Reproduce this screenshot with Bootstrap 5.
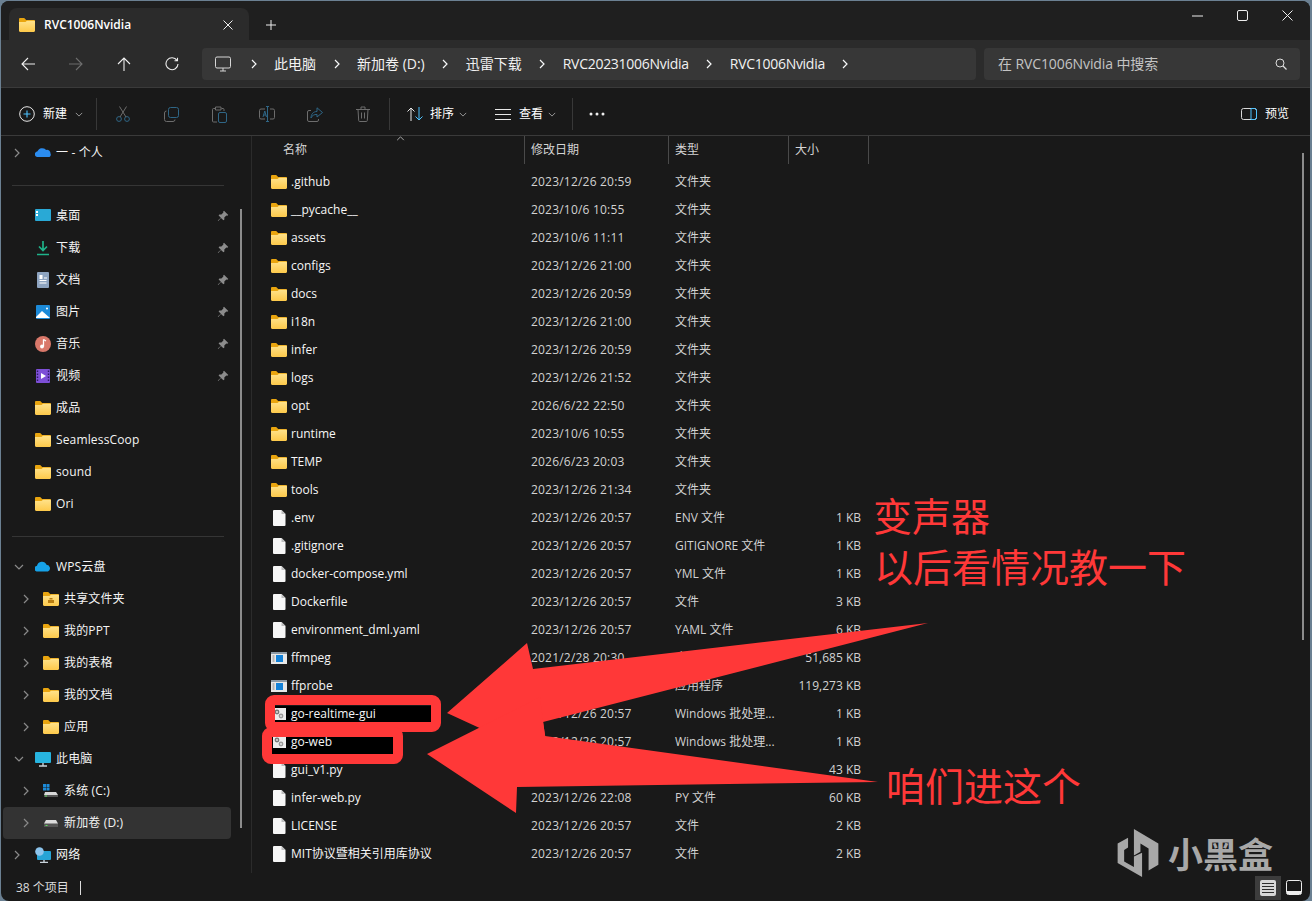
<!DOCTYPE html>
<html lang="zh-CN">
<head>
<meta charset="UTF-8">
<title>RVC1006Nvidia</title>
<link href="https://cdn.jsdelivr.net/npm/bootstrap@5.3.0/dist/css/bootstrap.min.css" rel="stylesheet">
<style>
html, body { height: 100%; overflow: hidden; }
body {
  position: relative;
  background: #6b8092;
  padding: 1px 2px 0 1px;
  font-family: "Open Sans", "Noto Sans CJK SC", sans-serif;
  font-size: 12px;
  color: #fff;
}
svg { display: block; flex: none; }
.win { height: 100%; background: #191919; border-radius: 8px; overflow: hidden; }

.title-bar { height: 39px; flex: none; background: #1f1f1f; padding-left: 8px; }
.tab-on { width: 240px; height: 32px; background: #2b2b2b; border-radius: 8px 8px 0 0; padding: 1px 16px 0 10px; }
.tab-name { margin-left: 9px; font-weight: 600; }
.tab-plus { margin-left: 16px; margin-top: 9px; }
.win-btn { width: 45px; height: 29px; }

.nav-bar { height: 48px; background: #2b2b2b; padding: 0 10px 0 3px; border-bottom: 1px solid #3a3a3a; }
.nav-btn { width: 48px; }
.crumbs { width: 774px; height: 32px; margin-left: 6px; background: #373737; border-radius: 4px; padding-left: 13px; gap: 17.500px; font-size: 14px; color: #f2f2f2; }
.crumb-pc { margin-right: 2px; }
.crumb-latin { letter-spacing: -.28px; }
.find-box { width: 316px; height: 32px; margin-left: 8px; background: #373737; border-radius: 4px; padding: 0 13px 0 14px; font-size: 14px; letter-spacing: -.1px; color: #c4c4c4; }

.tool-bar { height: 48px; border-bottom: 1px solid #3a3a3a; padding: 5px 21px 0 18px; }
.tool-sep { width: 1px; height: 32px; background: #383838; }
.tool-btn { width: 48px; color: #5f6a73; }
.tool-first { margin-left: 2px; }
.tool-last { margin-left: 2px; }
.drop-text { margin-left: 7px; }
.drop-mark { color: #9a9a9a; margin-left: 5px; }

.side-pane { width: 251px; border-right: 1px solid #2b2b2b; position: relative; padding-top: 1px; }
.side-row { height: 32px; margin: 0 20px 0 2px; border-radius: 4px; }
.side-row.is-sel { background: #333; }
.chev-slot { width: 32px; padding-left: 11px; color: #8a8a8a; }
.lvl-one .chev-slot { width: 40px; padding-left: 20px; }
.side-text { margin-left: 5px; color: #f4f4f4; letter-spacing: .15px; }
.side-pin { margin-left: auto; margin-right: 2px; }
.side-sep { height: 1px; background: #353535; margin: 16px 27px 14px 11px; }
.side-scroll { position: absolute; left: 239px; top: 73px; width: 2px; height: 619px; background: #8c8c8c; }

.list-pane { position: relative; min-width: 0; }
.list-head { height: 28px; color: #d4d4d4; }
.head-cell { height: 28px; border-right: 1px solid #4a4a4a; }
.sort-mark { position: absolute; left: 144px; top: 0; color: #a8a8a8; }
.list-grid { display: grid; grid-template-columns: 272px 144px 120px 80px; }
.list-head .list-grid { grid-template-columns: 273px 144px 120px 80px; }
.list-head .list-grid > div:nth-child(1) { padding-left: 31px; }
.list-head .list-grid > div:nth-child(2) { padding-left: 6px; }
.list-head .list-grid > div:nth-child(3) { padding-left: 6px; }
.list-head .list-grid > div:nth-child(4) { padding-left: 6px; }
.list-rows { margin-top: 4px; }
.file-row { height: 28px; align-items: center; color: #d2d2d2; }
.file-name { height: 28px; padding-left: 19px; gap: 4px; color: #f6f6f6; white-space: nowrap; }
.file-date { padding-left: 7px; letter-spacing: .2px; }
.file-type { padding-left: 7px; white-space: nowrap; }
.file-size { text-align: right; padding-right: 7px; }
.hit-one { background: linear-gradient(#000, #000) 23px 6px / 156px 17px no-repeat; }
.hit-two { background: linear-gradient(#000, #000) 20px 9px / 121px 18px no-repeat; }
.list-scroll { position: absolute; right: 6px; top: 17px; width: 2px; height: 487px; background: #8c8c8c; }

.status-bar { height: 28px; padding: 1px 3px 0 15px; color: #dcdcdc; }
.status-tick { width: 1px; height: 14px; background: #ddd; margin-left: 11px; }
.view-on { width: 26px; height: 24px; background: #3c3c3c; }
.view-off { width: 26px; height: 24px; }

.paint-layer { position: absolute; left: 0; top: 0; pointer-events: none; }
.note-red { position: absolute; color: #ff3838; font-family: "Noto Sans CJK SC", sans-serif; font-size: 39px; line-height: 50px; white-space: nowrap; pointer-events: none; font-weight: 400; }
.note-one { left: 873px; top: 489px; }
.note-two { left: 874px; top: 540px; }
.note-three { left: 886px; top: 759px; }
.mark-box { position: absolute; left: 1116px; top: 827px; color: #a8a8a8; gap: 8px; pointer-events: none; }
.mark-text { font-family: "Noto Sans CJK SC", sans-serif; font-size: 35px; font-weight: 700; line-height: 52px; }
</style>
</head>
<body>

<svg width="0" height="0" style="position:absolute">
  <defs>
    <linearGradient id="g-folder" x1="0" y1="0" x2="0" y2="1"><stop offset="0" stop-color="#ffe28a"/><stop offset="1" stop-color="#fdc94a"/></linearGradient>
    <symbol id="i-folder" viewBox="0 0 16 14">
      <path d="M0 1.200C0 .5.5 0 1.200 0h4l2 2H15c.6 0 1 .4 1 1v3H0z" fill="#e9a50f"/>
      <path d="M0 4h6.500l1.500-1.200H15c.6 0 1 .4 1 1v9c0 .7-.5 1.200-1.200 1.200H1.200C.5 14 0 13.500 0 12.800z" fill="url(#g-folder)"/>
    </symbol>
    <symbol id="i-file" viewBox="0 0 13 16">
      <path d="M1 0h7.500L12.500 4v11a1 1 0 0 1-1 1H1a1 1 0 0 1-1-1V1a1 1 0 0 1 1-1z" fill="#f6f6f6"/>
      <path d="M8.500 0v4h4z" fill="#bdbdbd"/>
    </symbol>
    <symbol id="i-exe" viewBox="0 0 16 12">
      <rect width="16" height="12" fill="#e8e8e8"/>
      <rect width="16" height="2" fill="#8d9aa5"/>
      <rect x="5" y="3" width="7" height="7" fill="#1482d8"/>
      <rect x="1.500" y="3" width="2" height="7" fill="#b5b5b5"/>
    </symbol>
    <symbol id="i-bat" viewBox="0 0 13 12">
      <rect width="13" height="12" fill="#ececec"/>
      <circle cx="4" cy="4" r="2.400" fill="#777"/><circle cx="4" cy="4" r=".9" fill="#ececec"/>
      <circle cx="8" cy="8" r="2.400" fill="#999"/><circle cx="8" cy="8" r=".9" fill="#ececec"/>
    </symbol>
    <symbol id="i-pin" viewBox="0 0 12 12">
      <path d="M7 .7 11.300 5 10.300 5.700 9.300 5.500 7.300 7.500 7.400 9.500 6.400 10.300 4 7.900 1.200 11 .8 10.600 3.900 7.800 1.600 5.400 2.400 4.500 4.400 4.600 6.400 2.600 6.200 1.600z" fill="#8c8c8c"/>
    </symbol>
    <symbol id="i-chev-r" viewBox="0 0 6 10"><path d="M1 1l4 4-4 4" fill="none" stroke="currentColor" stroke-width="1.200"/></symbol>
    <symbol id="i-chev-d" viewBox="0 0 10 6"><path d="M1 1l4 4 4-4" fill="none" stroke="currentColor" stroke-width="1.200"/></symbol>
  </defs>
</svg>

<div class="win d-flex flex-column">

  <div class="title-bar d-flex align-items-end">
    <div class="tab-on d-flex align-items-center">
      <svg width="16" height="14"><use href="#i-folder"/></svg>
      <span class="tab-name">RVC1006Nvidia</span>
      <svg class="ms-auto" width="10" height="10" viewBox="0 0 10 10"><path d="M.5.500l9 9m0-9l-9 9" stroke="#eee" stroke-width="1"/></svg>
    </div>
    <div class="tab-plus align-self-center">
      <svg width="12" height="12" viewBox="0 0 12 12"><path d="M6 1v10M1 6h10" stroke="#eee" stroke-width="1"/></svg>
    </div>
    <div class="ms-auto align-self-start d-flex">
      <div class="win-btn d-flex align-items-center justify-content-center"><svg width="11" height="2"><path d="M0 1h11" stroke="#eee"/></svg></div>
      <div class="win-btn d-flex align-items-center justify-content-center"><svg width="11" height="11" viewBox="0 0 11 11"><rect x=".5" y=".5" width="10" height="10" rx="1.500" fill="none" stroke="#eee"/></svg></div>
      <div class="win-btn d-flex align-items-center justify-content-center"><svg width="11" height="11" viewBox="0 0 11 11"><path d="M.5.500l10 10m0-10l-10 10" stroke="#eee"/></svg></div>
    </div>
  </div>

  <div class="nav-bar d-flex align-items-center flex-shrink-0">
    <div class="nav-btn d-flex justify-content-center"><svg width="14" height="14" viewBox="0 0 14 14"><path d="M14 7H1M7 1 1 7l6 6" fill="none" stroke="#eee" stroke-width="1.100"/></svg></div>
    <div class="nav-btn d-flex justify-content-center"><svg width="14" height="14" viewBox="0 0 14 14"><path d="M0 7h13M7 1l6 6-6 6" fill="none" stroke="#6d6d6d" stroke-width="1.100"/></svg></div>
    <div class="nav-btn d-flex justify-content-center"><svg width="14" height="14" viewBox="0 0 14 14"><path d="M7 14V1M1 7l6-6 6 6" fill="none" stroke="#eee" stroke-width="1.100"/></svg></div>
    <div class="nav-btn d-flex justify-content-center"><svg width="14" height="14" viewBox="0 0 14 14"><path d="M12 3.400A6 6 0 1 0 13 7M12.500 .8v3h-3" fill="none" stroke="#eee" stroke-width="1.100"/></svg></div>
    <div class="crumbs d-flex align-items-center">
      <svg width="16" height="16" viewBox="0 0 16 16" class="crumb-pc"><rect x=".5" y="1" width="15" height="11" rx="1.500" fill="none" stroke="#d6d6d6"/><path d="M5 15h6M8 12v3" stroke="#d6d6d6"/></svg>
      <svg width="6" height="10" class="text-light"><use href="#i-chev-r"/></svg><span>此电脑</span>
      <svg width="6" height="10" class="text-light"><use href="#i-chev-r"/></svg><span>新加卷 (D:)</span>
      <svg width="6" height="10" class="text-light"><use href="#i-chev-r"/></svg><span>迅雷下载</span>
      <svg width="6" height="10" class="text-light"><use href="#i-chev-r"/></svg><span class="crumb-latin">RVC20231006Nvidia</span>
      <svg width="6" height="10" class="text-light"><use href="#i-chev-r"/></svg><span class="crumb-latin">RVC1006Nvidia</span>
      <svg width="6" height="10" class="text-light"><use href="#i-chev-r"/></svg>
    </div>
    <div class="find-box d-flex align-items-center justify-content-between">
      <span>在 RVC1006Nvidia 中搜索</span>
      <svg width="12" height="12" viewBox="0 0 12 12"><circle cx="5" cy="5" r="4" fill="none" stroke="#ddd"/><path d="M8 8l3.500 3.500" stroke="#ddd" stroke-width="1.200"/></svg>
    </div>
  </div>

  <div class="tool-bar d-flex align-items-center flex-shrink-0">
    <div class="d-flex align-items-center" style="width:77px">
      <svg width="16" height="16" viewBox="0 0 16 16"><circle cx="8" cy="8" r="7.300" fill="none" stroke="#e8e8e8"/><path d="M8 4.500v7M4.500 8h7" stroke="#4cc2ff" stroke-width="1.100"/></svg>
      <span class="ms-2">新建</span>
      <svg width="8" height="5" class="drop-mark ms-2"><use href="#i-chev-d"/></svg>
    </div>
    <div class="tool-sep"></div>
    <div class="tool-btn tool-first d-flex justify-content-center"><svg width="14" height="16" viewBox="0 0 14 16"><circle cx="3" cy="13" r="2.400" fill="none" stroke="#2f6686"/><circle cx="11" cy="13" r="2.400" fill="none" stroke="#2f6686"/><path d="M4 11 10.500 .5M10 11 3.500 .5" fill="none" stroke="#6d6d6d"/></svg></div>
    <div class="tool-btn d-flex justify-content-center"><svg width="15" height="15" viewBox="0 0 15 15"><rect x="4.500" y=".5" width="10" height="10" rx="2" fill="none" stroke="#2f6686"/><path d="M2.500 4A2 2 0 0 0 .5 6v6.500a2 2 0 0 0 2 2H9a2 2 0 0 0 2-2" fill="none" stroke="#6d6d6d"/></svg></div>
    <div class="tool-btn d-flex justify-content-center"><svg width="15" height="17" viewBox="0 0 15 17"><path d="M3 2.500H1.500a1 1 0 0 0-1 1V15a1 1 0 0 0 1 1H5M9.500 2.500H11a1 1 0 0 1 1 1V5M3.500 1h5.500v3H3.500z" fill="none" stroke="#6d6d6d"/><rect x="6.500" y="6.500" width="8" height="10" rx="1.500" fill="none" stroke="#2f6686"/></svg></div>
    <div class="tool-btn d-flex justify-content-center"><svg width="16" height="16" viewBox="0 0 16 16"><path d="M6 3H2a1.500 1.500 0 0 0-1.500 1.500v7A1.500 1.500 0 0 0 2 13h4M11 3h3a1.500 1.500 0 0 1 1.500 1.500v7A1.500 1.500 0 0 1 14 13h-3" fill="none" stroke="#6d6d6d"/><path d="M8.500 .5v15M7 .5h3M7 15.500h3M4 11l1.800-6 1.700 6M4.600 9h2.400" fill="none" stroke="#2f6686"/></svg></div>
    <div class="tool-btn d-flex justify-content-center"><svg width="16" height="15" viewBox="0 0 16 15"><path d="M4 3.500H2A1.500 1.500 0 0 0 .5 5v8A1.500 1.500 0 0 0 2 14.500h8a1.500 1.500 0 0 0 1.500-1.500v-1" fill="none" stroke="#6d6d6d"/><path d="M10 .8 15.500 5.500 10 10V7.400C7 7.400 5 8.500 4 11c0-4 2.500-6.500 6-6.500z" fill="none" stroke="#2f6686"/></svg></div>
    <div class="tool-btn d-flex justify-content-center"><svg width="14" height="16" viewBox="0 0 14 16"><path d="M0 3.500h14M5 3.500V1h4v2.500M2 3.500l.7 11a1 1 0 0 0 1 1h6.600a1 1 0 0 0 1-1l.7-11M5.500 6.500v6M8.500 6.500v6" fill="none" stroke="#6d6d6d"/></svg></div>
    <div class="tool-sep tool-last"></div>
    <div class="d-flex align-items-center" style="margin-left:17px;width:88px">
      <svg width="16" height="14" viewBox="0 0 16 14"><path d="M4 14V1M.5 4.500 4 1l3.500 3.500" fill="none" stroke="#e8e8e8"/><path d="M12 0v13M8.500 9.500 12 13l3.500-3.500" fill="none" stroke="#4cc2ff"/></svg>
      <span class="drop-text">排序</span>
      <svg width="8" height="5" class="drop-mark"><use href="#i-chev-d"/></svg>
    </div>
    <div class="d-flex align-items-center" style="width:77px">
      <svg width="16" height="11" viewBox="0 0 16 11"><path d="M0 .5h16M0 5.500h16M0 10.500h16" stroke="#e8e8e8"/></svg>
      <span style="margin-left:8px">查看</span>
      <svg width="8" height="5" class="drop-mark"><use href="#i-chev-d"/></svg>
    </div>
    <div class="tool-sep"></div>
    <svg width="16" height="4" viewBox="0 0 16 4" style="margin-left:16px"><circle cx="2" cy="2" r="1.500" fill="#eee"/><circle cx="8" cy="2" r="1.500" fill="#eee"/><circle cx="14" cy="2" r="1.500" fill="#eee"/></svg>
    <div class="ms-auto d-flex align-items-center">
      <svg width="16" height="12" viewBox="0 0 16 12"><rect x=".5" y=".5" width="15" height="11" rx="2" fill="none" stroke="#d8d8d8"/><path d="M10 .5h3.500a2 2 0 0 1 2 2v7a2 2 0 0 1-2 2H10z" fill="none" stroke="#4cc2ff"/></svg>
      <span class="ms-2">预览</span>
    </div>
  </div>

  <div class="d-flex flex-grow-1 overflow-hidden" style="flex-basis:0;min-height:0">
    <div class="side-pane flex-shrink-0" id="sidePane">
      <div class="side-scroll"></div>
    </div>
    <div class="list-pane flex-grow-1 overflow-hidden">
      <div class="list-head">
        <div class="list-grid" style="width:617px">
          <div class="head-cell d-flex align-items-center">名称</div>
          <div class="head-cell d-flex align-items-center">修改日期</div>
          <div class="head-cell d-flex align-items-center">类型</div>
          <div class="head-cell d-flex align-items-center">大小</div>
        </div>
      </div>
      <svg class="sort-mark" width="9" height="5"><use href="#i-chev-d" transform="rotate(180 4.500 2.500)"/></svg>
      <div class="list-rows" id="fileRows"></div>
      <div class="list-scroll"></div>
    </div>
  </div>

  <div class="status-bar d-flex align-items-center flex-shrink-0">
    <span>38 个项目</span>
    <div class="status-tick"></div>
    <div class="ms-auto d-flex align-items-center">
      <div class="view-on d-flex align-items-center justify-content-center"><svg width="16" height="16" viewBox="0 0 16 16"><rect width="16" height="16" rx="2" fill="#d8d8d8"/><path d="M2 3.500h12M2 6.500h12M2 9.500h12M2 12.500h12" stroke="#2e2e2e"/></svg></div>
      <div class="view-off d-flex align-items-center justify-content-center"><svg width="16" height="15" viewBox="0 0 16 15"><rect x=".5" y=".5" width="15" height="14" rx="2" fill="#191919" stroke="#eee"/><rect x="1" y="11" width="14" height="3" fill="#eee"/></svg></div>
    </div>
  </div>
</div>

<svg class="paint-layer" width="1312" height="901" viewBox="0 0 1312 901">
  <polygon points="447,713 527,643 533,669 928,623 543,722 549,760" fill="#ff3838"/>
  <polygon points="427,754 540,697 545,736 878,782 517,787 516,813" fill="#ff3838"/>
  <rect x="270" y="700" width="166" height="27" rx="4" fill="none" stroke="#ff3838" stroke-width="10"/>
  <rect x="267" y="732" width="131" height="27" rx="4" fill="none" stroke="#ff3838" stroke-width="10"/>
</svg>
<div class="note-red note-one">变声器</div>
<div class="note-red note-two">以后看情况教一下</div>
<div class="note-red note-three">咱们进这个</div>
<div class="mark-box d-flex align-items-center">
  <svg width="44" height="52" viewBox="75 50 135 158"><path d="M130 55 205 100V165L175 183V115L150 100V125L130 137z" fill="#a8a8a8"/><path d="M112 82V112L100 120V155L130 172V140L155 128V203L80 160V100z" fill="#a8a8a8"/></svg>
  <span class="mark-text">小黑盒</span>
</div>

<script>
  // 左侧导航
  const svgIcons = {
    cloud: '<path d="M1 11.500a3 3 0 0 1 1.500-5.300A5 5 0 0 1 11 5a3.500 3.500 0 0 1 4.500 3.500 2.800 2.800 0 0 1-1 3.500H2z" fill="#2b8cf0"/>',
    desk: '<rect y="1" width="16" height="12" rx="1" fill="#29a9d6"/><rect x="1" y="3" width="2" height="2" fill="#fff"/><rect x="1" y="6" width="2" height="2" fill="#fff"/>',
    down: '<path d="M8 1v9M4 6.500 8 10.500l4-4M2 14.500h12" fill="none" stroke="#1fb38a" stroke-width="1.700"/>',
    docs: '<rect x="2" width="12" height="16" rx="1" fill="#8ea4c0"/><path d="M4.500 3.500h3M9 6h3M4.500 8.500h7M4.500 11h7" stroke="#fff"/><rect x="4.500" y="4" width="3" height="3" fill="#fff"/>',
    pics: '<rect x="1" y="1" width="14" height="14" rx="1" fill="#1c8ad8"/><path d="M1 13l6-6 8 7H1z" fill="#fff"/><circle cx="12" cy="4.500" r="1" fill="#fff"/>',
    music: '<circle cx="8" cy="8" r="8" fill="#d9786a"/><path d="M8.500 3.500v7" stroke="#fff" stroke-width="1.300"/><circle cx="7" cy="10.500" r="1.900" fill="#fff"/><path d="M8.500 3.500 11 5" stroke="#fff" stroke-width="1.300"/>',
    video: '<rect x="1" y="1" width="14" height="14" rx="1" fill="#7d4fd6"/><path d="M6 5v6l5-3z" fill="#fff"/><path d="M2.500 2.500v11M13.500 2.500v11" stroke="#2c1a60" stroke-width="1.400" stroke-dasharray="1.500 1.500"/>',
    wps: '<path d="M1.500 12.500a3 3 0 0 1 .5-5.800 5 5 0 0 1 9.500-1 3.600 3.600 0 0 1 1.500 6.800H2z" fill="#16a2e8"/>',
    share: '<use href="#i-folder" width="16" height="14" y="1"/><path d="M5 9h6v3H5zM6.500 7h3v1.500h-3z" fill="#b97d10"/>',
    pc: '<rect y="1" width="16" height="11" rx="1" fill="#27b4e0"/><path d="M4 15h8M8 12v3" stroke="#c8d2da" stroke-width="1.400"/>',
    drivec: '<rect x="0" y="1" width="3" height="3" fill="#1c8ad8"/><rect x="3.500" y="1" width="3" height="3" fill="#1c8ad8"/><rect y="4.500" width="3" height="3" fill="#1c8ad8"/><rect x="3.500" y="4.500" width="3" height="3" fill="#1c8ad8"/><path d="M2 9h11l2 3v2H1v-2z" fill="#d8d8d8"/><rect x="1" y="12" width="14" height="2" fill="#555"/><rect x="2" y="12.500" width="2" height="1" fill="#5ee05e"/>',
    drived: '<path d="M3 5h10l2 3.500V12H1V8.500z" fill="#dcdcdc"/><rect x="1" y="8.500" width="14" height="3.500" fill="#555"/><rect x="2.500" y="10" width="2" height="1" fill="#5ee05e"/>',
    net: '<rect x="2" y="4" width="14" height="9" rx="1" fill="#27a4d6"/><path d="M5 15.500h8M9 13v2.500" stroke="#c8d2da" stroke-width="1.400"/><circle cx="4.500" cy="4.500" r="4.300" fill="#8cc4ec"/>'
  };
  const folderIcon = '<svg width="16" height="14"><use href="#i-folder"/></svg>';
  const icon = name => name == "folder" ? folderIcon : `<svg width="16" height="16" viewBox="0 0 16 16">${svgIcons[name]}</svg>`;
  const sideItems = [
    { t: "一 - 个人", i: "cloud", c: "r" },
    "sep",
    { t: "桌面", i: "desk", pin: 1 }, { t: "下载", i: "down", pin: 1 }, { t: "文档", i: "docs", pin: 1 },
    { t: "图片", i: "pics", pin: 1 }, { t: "音乐", i: "music", pin: 1 }, { t: "视频", i: "video", pin: 1 },
    { t: "成品", i: "folder" }, { t: "SeamlessCoop", i: "folder" }, { t: "sound", i: "folder" }, { t: "Ori", i: "folder" },
    "sep",
    { t: "WPS云盘", i: "wps", c: "d" },
    { t: "共享文件夹", i: "share", c: "r", l: 1 }, { t: "我的PPT", i: "folder", c: "r", l: 1 },
    { t: "我的表格", i: "folder", c: "r", l: 1 }, { t: "我的文档", i: "folder", c: "r", l: 1 }, { t: "应用", i: "folder", c: "r", l: 1 },
    { t: "此电脑", i: "pc", c: "d" },
    { t: "系统 (C:)", i: "drivec", c: "r", l: 1 }, { t: "新加卷 (D:)", i: "drived", c: "r", l: 1, sel: 1 },
    { t: "网络", i: "net", c: "r" }
  ];
  const sidePane = document.getElementById("sidePane");
  sideItems.forEach(item => {
    const div = document.createElement("div");
    if (item == "sep") { div.className = "side-sep"; sidePane.appendChild(div); return; }
    div.className = "side-row d-flex align-items-center" + (item.l ? " lvl-one" : "") + (item.sel ? " is-sel" : "");
    let chev = "";
    if (item.c == "r") chev = '<svg width="6" height="10"><use href="#i-chev-r"/></svg>';
    if (item.c == "d") chev = '<svg width="10" height="6"><use href="#i-chev-d"/></svg>';
    div.innerHTML = `<div class="chev-slot">${chev}</div>${icon(item.i)}<span class="side-text">${item.t}</span>` +
      (item.pin ? '<svg class="side-pin" width="12" height="12"><use href="#i-pin"/></svg>' : "");
    sidePane.appendChild(div);
  });

  // 文件列表
  const D = "2023/12/26 ";
  const files = [
    [".github", D + "20:59", "文件夹", "", "folder"], ["__pycache__", "2023/10/6 10:55", "文件夹", "", "folder"],
    ["assets", "2023/10/6 11:11", "文件夹", "", "folder"], ["configs", D + "21:00", "文件夹", "", "folder"],
    ["docs", D + "20:59", "文件夹", "", "folder"], ["i18n", D + "21:00", "文件夹", "", "folder"],
    ["infer", D + "20:59", "文件夹", "", "folder"], ["logs", D + "21:52", "文件夹", "", "folder"],
    ["opt", "2026/6/22 22:50", "文件夹", "", "folder"], ["runtime", "2023/10/6 10:55", "文件夹", "", "folder"],
    ["TEMP", "2026/6/23 20:03", "文件夹", "", "folder"], ["tools", D + "21:34", "文件夹", "", "folder"],
    [".env", D + "20:57", "ENV 文件", "1 KB", "file"], [".gitignore", D + "20:57", "GITIGNORE 文件", "1 KB", "file"],
    ["docker-compose.yml", D + "20:57", "YML 文件", "1 KB", "file"], ["Dockerfile", D + "20:57", "文件", "3 KB", "file"],
    ["environment_dml.yaml", D + "20:57", "YAML 文件", "6 KB", "file"],
    ["ffmpeg", "2021/2/28 20:30", "应用程序", "51,685 KB", "exe"], ["ffprobe", "2021/2/28 20:30", "应用程序", "119,273 KB", "exe"],
    ["go-realtime-gui", D + "20:57", "Windows 批处理...", "1 KB", "bat", "hit-one"],
    ["go-web", D + "20:57", "Windows 批处理...", "1 KB", "bat", "hit-two"],
    ["gui_v1.py", D + "20:57", "PY 文件", "43 KB", "file"], ["infer-web.py", D + "22:08", "PY 文件", "60 KB", "file"],
    ["LICENSE", D + "20:57", "文件", "2 KB", "file"], ["MIT协议暨相关引用库协议", D + "20:57", "文件", "2 KB", "file"],
    ["", "", "", "", "file"]
  ];
  const fileSvg = {
    folder: folderIcon,
    file: '<svg width="13" height="16" style="margin:0 1px 0 2px"><use href="#i-file"/></svg>',
    exe: '<svg width="16" height="12"><use href="#i-exe"/></svg>',
    bat: '<svg width="13" height="12" style="margin:0 1px 0 2px"><use href="#i-bat"/></svg>'
  };
  const fileRows = document.getElementById("fileRows");
  files.forEach(f => {
    const div = document.createElement("div");
    div.className = "file-row list-grid";
    div.style.width = "616px";
    div.innerHTML = `<div class="file-name d-flex align-items-center ${f[5] || ""}">${fileSvg[f[4]]}<span>${f[0]}</span></div>
      <div class="file-date">${f[1]}</div><div class="file-type">${f[2]}</div><div class="file-size">${f[3]}</div>`;
    fileRows.appendChild(div);
  });
</script>
<script src="https://cdn.jsdelivr.net/npm/bootstrap@5.3.0/dist/js/bootstrap.bundle.min.js"></script>
</body>
</html>
